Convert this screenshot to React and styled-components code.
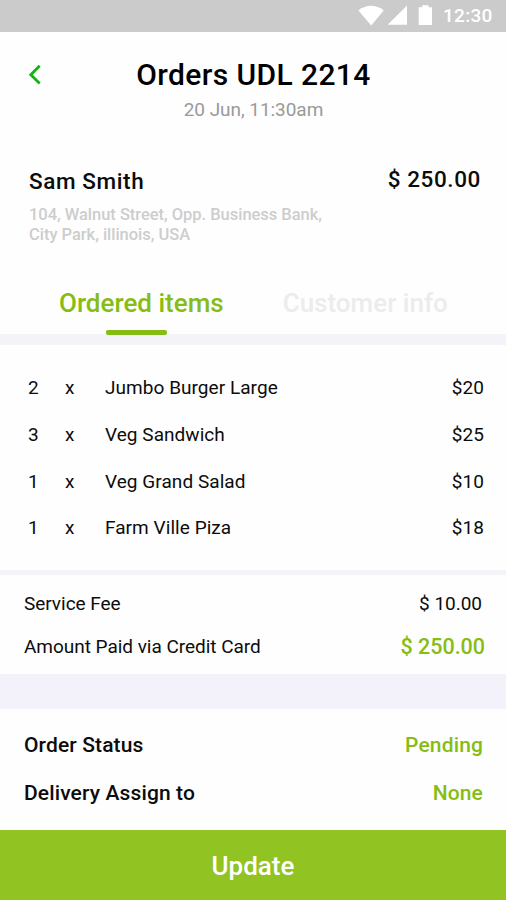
import React, { useState } from 'react';
import styled, { createGlobalStyle } from 'styled-components';

const GlobalStyle = createGlobalStyle`
  * {
    box-sizing: border-box;
  }
  body {
    margin: 0;
    background: #fefefe;
    font-family: Roboto, 'Liberation Sans', sans-serif;
    color: #0c0c0c;
  }
  button {
    font-family: inherit;
    padding: 0;
    border: 0;
    background: none;
    cursor: pointer;
  }
`;

const Screen = styled.div`
  display: flex;
  flex-direction: column;
  width: 506px;
  height: 900px;
  overflow: hidden;
  white-space: nowrap;
`;

const StatusBar = styled.div`
  display: flex;
  justify-content: flex-end;
  align-items: center;
  height: 32px;
  padding-right: 13px;
  background: #cbcbcb;
  color: #fff;
  svg {
    width: 76px;
    height: 22px;
    margin-right: 9px;
  }
`;

const Clock = styled.span`
  width: 50px;
  font-size: 19px;
  font-weight: 500;
  letter-spacing: 0.3px;
  line-height: 30px;
`;

const TopBar = styled.header`
  display: grid;
  grid-template-columns: 72px 1fr 72px;
  height: 106px;
  padding-top: 26px;
`;

const BackButton = styled.button`
  display: flex;
  height: 34px;
  padding: 6px 0 0 28px;
`;

const Heading = styled.div`
  padding-left: 1px;
  text-align: center;
  h1 {
    margin: 0;
    font-size: 30px;
    font-weight: 500;
    line-height: 34px;
    letter-spacing: 0.4px;
    color: #000;
  }
  p {
    margin: 6px 0 0;
    font-size: 19px;
    line-height: 24px;
    letter-spacing: -0.05px;
    color: #9a9a9a;
  }
`;

const Customer = styled.section`
  display: flex;
  justify-content: space-between;
  height: 136px;
  padding: 29px 25px 0 29px;
  h2 {
    margin: 0;
    font-size: 22.5px;
    font-weight: 500;
    line-height: 28px;
    letter-spacing: 0.6px;
  }
  address {
    margin-top: 10px;
    font-size: 16.5px;
    font-style: normal;
    font-weight: 500;
    line-height: 20px;
    letter-spacing: -0.03px;
    color: #cdcdcd;
  }
`;

const Total = styled.div`
  font-size: 22.5px;
  font-weight: 500;
  line-height: 25px;
  letter-spacing: 0.6px;
`;

const Tabs = styled.nav`
  display: flex;
  gap: 59px;
  height: 60px;
  padding-left: 59px;
`;

const Tab = styled.button`
  position: relative;
  display: flex;
  font-size: 26px;
  font-weight: 500;
  line-height: 58px;
  color: ${(props) => (props.$active ? '#86bd14' : '#ececec')};
  &::after {
    content: '';
    display: ${(props) => (props.$active ? 'block' : 'none')};
    position: absolute;
    left: 47px;
    top: 56px;
    width: 61px;
    height: 5px;
    border-radius: 2px;
    background: #86bd14;
  }
`;

const Band = styled.div`
  height: ${(props) => props.$height}px;
  background: ${(props) => props.$color || '#f3f3f8'};
`;

const Items = styled.section`
  height: 225px;
  padding: 20px 22px 0 28px;
`;

const ItemRow = styled.div`
  display: grid;
  grid-template-columns: 37px 40px 1fr auto;
  height: 46.8px;
  font-size: 19px;
  line-height: 46.8px;
  letter-spacing: 0.05px;
`;

const Fees = styled.section`
  height: 99px;
  padding: 7px 21px 0 24px;
`;

const FeeRow = styled.div`
  display: flex;
  justify-content: space-between;
  height: 43px;
  padding-right: ${(props) => (props.$paid ? 0 : 3)}px;
  font-size: 19px;
  line-height: 43px;
  letter-spacing: -0.03px;
`;

const PaidAmount = styled.span`
  font-size: 21.5px;
  font-weight: 500;
  line-height: 43px;
  color: #86bd14;
`;

const Statuses = styled.section`
  height: 121px;
  padding: 12px 23px 0 24px;
`;

const StatusRow = styled.div`
  display: flex;
  justify-content: space-between;
  height: 48px;
  font-size: 21px;
  font-weight: 500;
  line-height: 48px;
  letter-spacing: 0.13px;
  span:last-child {
    color: #86bd14;
  }
`;

const UpdateButton = styled.button`
  height: 70px;
  padding-top: 2px;
  background: #91c422;
  color: #fff;
  font-size: 26px;
  font-weight: 500;
  line-height: 68px;
`;

const items = [
  { count: 2, name: 'Jumbo Burger Large', price: '$20' },
  { count: 3, name: 'Veg Sandwich', price: '$25' },
  { count: 1, name: 'Veg Grand Salad', price: '$10' },
  { count: 1, name: 'Farm Ville Piza', price: '$18' },
];

const StatusIcons = () => (
  <svg viewBox="0 0 76 22" fill="#fff">
    <path d="M0.5 5.5C8 -0.7 18 -0.7 25.7 5.5L13.2 20.5Z" />
    <path d="M49 0.5V19.8H29.7Z" />
    <path d="M60.7 2.2h3.6V0.3h6.2v1.9h3.5v17.8H60.7Z" />
  </svg>
);

const App = () => {
  const [tab, setTab] = useState('items');

  return (
    <>
      <GlobalStyle />
      <Screen>
        <StatusBar>
          <StatusIcons />
          <Clock>12:30</Clock>
        </StatusBar>
        <TopBar>
          <BackButton aria-label="Back">
            <svg width="14" height="22" viewBox="0 0 14 22" fill="none">
              <path d="M11.7 1.8L2.8 10.8L11.7 19.4" stroke="#10b510" strokeWidth="2.8" />
            </svg>
          </BackButton>
          <Heading>
            <h1>Orders UDL 2214</h1>
            <p>20 Jun, 11:30am</p>
          </Heading>
        </TopBar>
        <Customer>
          <div>
            <h2>Sam Smith</h2>
            <address>
              104, Walnut Street, Opp. Business Bank,
              <br />
              City Park, illinois, USA
            </address>
          </div>
          <Total>$ 250.00</Total>
        </Customer>
        <Tabs>
          <Tab $active={tab === 'items'} onClick={() => setTab('items')}>
            Ordered items
          </Tab>
          <Tab $active={tab === 'info'} onClick={() => setTab('info')}>
            Customer info
          </Tab>
        </Tabs>
        <Band $height={11} />
        <Items>
          {items.map((item) => (
            <ItemRow key={item.name}>
              <span>{item.count}</span>
              <span>x</span>
              <span>{item.name}</span>
              <span>{item.price}</span>
            </ItemRow>
          ))}
        </Items>
        <Band $height={5} />
        <Fees>
          <FeeRow>
            <span>Service Fee</span>
            <span>$ 10.00</span>
          </FeeRow>
          <FeeRow $paid>
            <span>Amount Paid via Credit Card</span>
            <PaidAmount>$ 250.00</PaidAmount>
          </FeeRow>
        </Fees>
        <Band $height={35} $color="#f3f2fb" />
        <Statuses>
          <StatusRow>
            <span>Order Status</span>
            <span>Pending</span>
          </StatusRow>
          <StatusRow>
            <span>Delivery Assign to</span>
            <span>None</span>
          </StatusRow>
        </Statuses>
        <UpdateButton>Update</UpdateButton>
      </Screen>
    </>
  );
};

export default App;
